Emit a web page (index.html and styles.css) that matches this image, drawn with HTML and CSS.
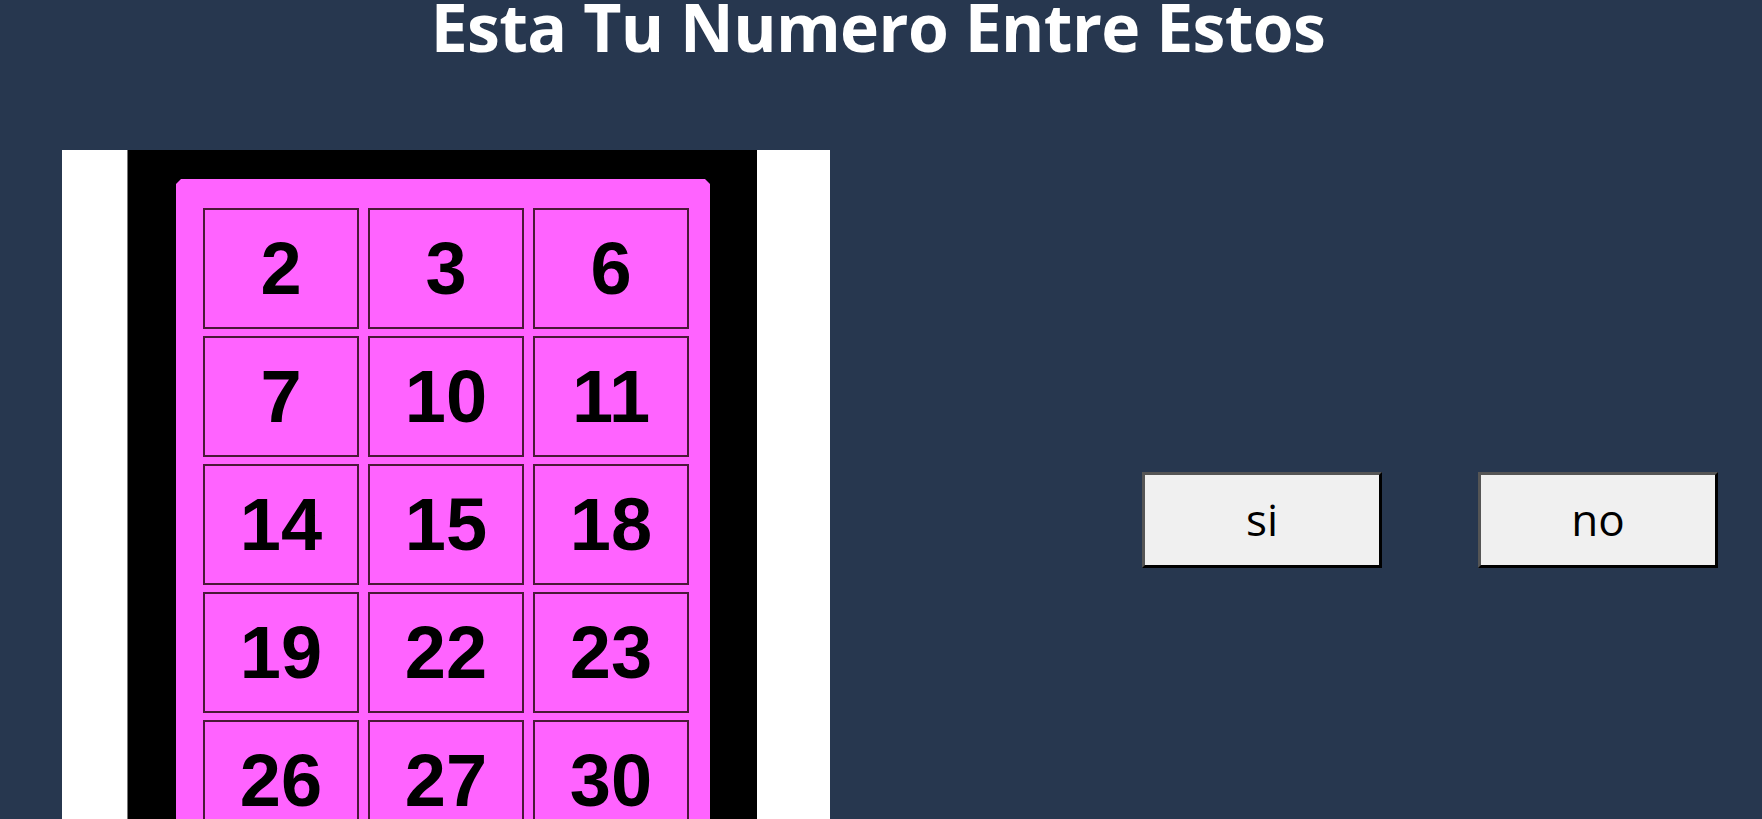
FILE: index.html
```html
<!DOCTYPE html>
<html lang="es">
<head>
<meta charset="utf-8">
<title>Esta Tu Numero Entre Estos</title>
<link rel="stylesheet" href="styles.css">
</head>
<body>
<div class="page">
  <h1 class="title">Esta Tu Numero Entre Estos</h1>
  <div class="main">
    <div class="card-image">
      <div class="card-frame">
        <div class="card-panel">
          <div class="cell">2</div>
          <div class="cell">3</div>
          <div class="cell">6</div>
          <div class="cell">7</div>
          <div class="cell">10</div>
          <div class="cell">11</div>
          <div class="cell">14</div>
          <div class="cell">15</div>
          <div class="cell">18</div>
          <div class="cell">19</div>
          <div class="cell">22</div>
          <div class="cell">23</div>
          <div class="cell">26</div>
          <div class="cell">27</div>
          <div class="cell">30</div>
          <div class="cell">31</div>
        </div>
      </div>
    </div>
    <div class="actions">
      <button class="btn" type="button">si</button>
      <button class="btn" type="button">no</button>
    </div>
  </div>
</div>
</body>
</html>
```

FILE: styles.css
```css
html, body {
  margin: 0;
  padding: 0;
  background: #27374f;
}

.page {
  height: 819px;
  overflow: hidden;
}

.title {
  margin: 0;
  padding-right: 6px;
  text-align: center;
  font-family: "Open Sans", "Noto Sans", sans-serif;
  font-weight: 700;
  font-size: 66px;
  line-height: 52px;
  color: #ffffff;
  letter-spacing: -0.6px;
}

.main {
  display: flex;
  align-items: flex-start;
  margin-top: 98px;
  padding-left: 62px;
}

.card-image {
  width: 768px;
  height: 760px;
  background: #ffffff;
  padding-left: 66px;
  box-sizing: border-box;
  flex: none;
}

.card-frame {
  width: 629px;
  height: 100%;
  background: #000000;
  padding: 29px 47px 0 48px;
  box-sizing: border-box;
  box-shadow: -1px 0 0 #777;
}

.card-panel {
  background: #ff63ff;
  height: 100%;
  padding: 29px 21px 0 27px;
  box-sizing: border-box;
  display: grid;
  grid-template-columns: repeat(3, 156px);
  grid-auto-rows: 121px;
  column-gap: 9px;
  row-gap: 7px;
  clip-path: polygon(5px 0, calc(100% - 5px) 0, 100% 5px, 100% 100%, 0 100%, 0 5px);
}

.cell {
  border: 2px solid #4a1838;
  display: flex;
  align-items: center;
  justify-content: center;
  font-family: "Liberation Sans", Arial, sans-serif;
  font-weight: bold;
  font-size: 74px;
  color: #000000;
}

.actions {
  display: flex;
  gap: 96px;
  margin-left: 312px;
  margin-top: 322px;
}

.btn {
  width: 240px;
  height: 96px;
  box-sizing: border-box;
  background: #f0f0f0;
  border: 3px solid;
  border-color: #555555 #000000 #000000 #555555;
  font-family: "Open Sans", "Noto Sans", sans-serif;
  font-size: 44px;
  color: #000000;
  padding: 0 0 2px 0;
}
```
